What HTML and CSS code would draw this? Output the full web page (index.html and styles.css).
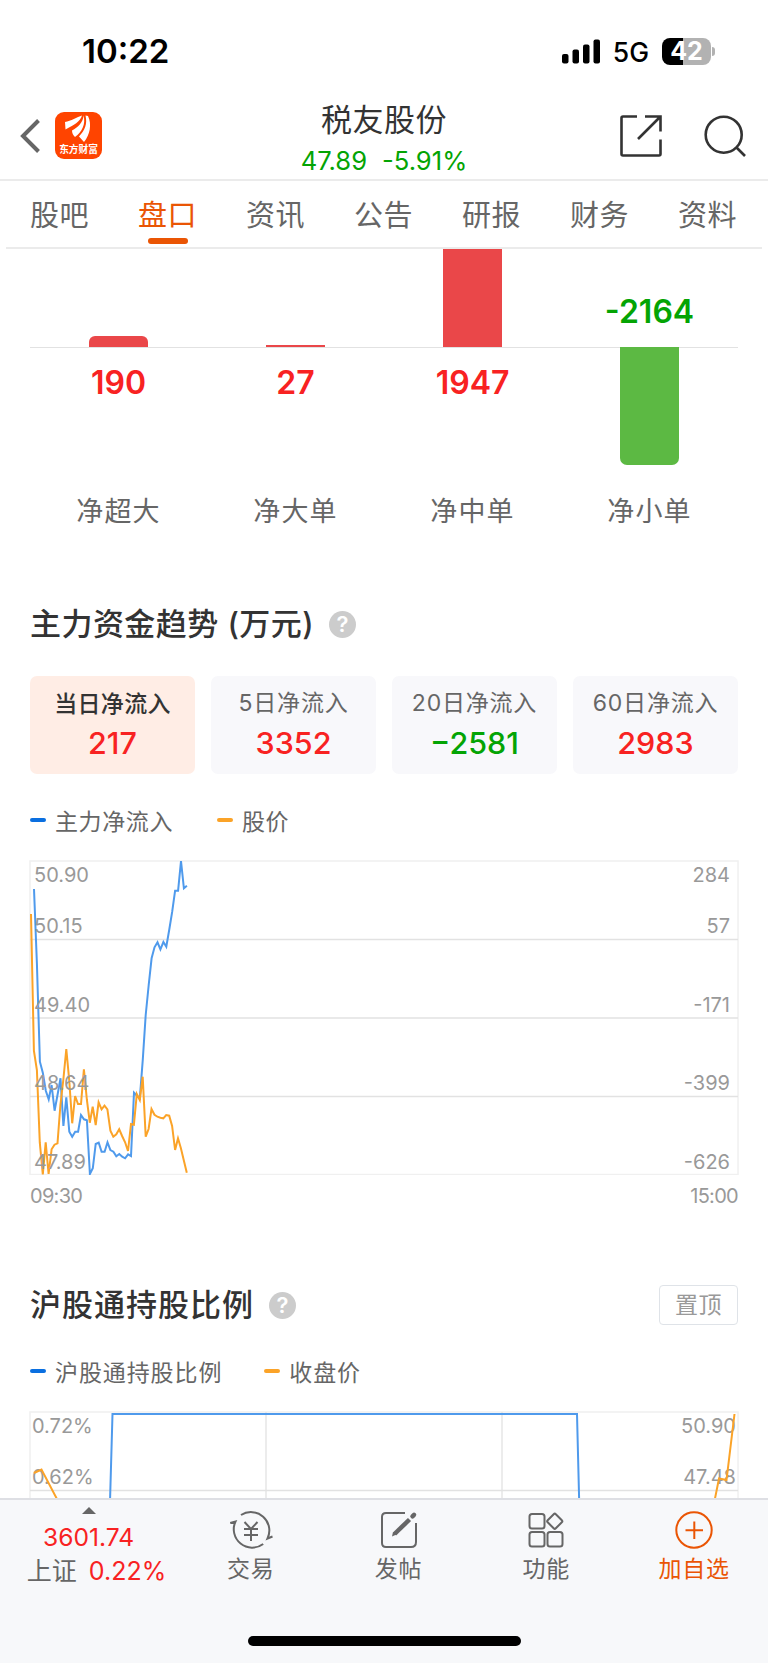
FILE: index.html
```html
<!DOCTYPE html>
<html lang="zh-CN">
<head>
    <meta charset="UTF-8">
    <meta name="viewport" content="width=device-width, initial-scale=1.0">
    <title>税友股份 - 盘口</title>
    <link rel="stylesheet" href="styles.css">
</head>
<body>
    <div class="status-bar">
        <span class="time">10:22</span>
        <div class="status-right">
            <svg class="signal" width="39" height="25" viewBox="0 0 39 25">
                <rect x="0" y="15" width="6.5" height="9.5" rx="2"/>
                <rect x="10.5" y="10.5" width="6.5" height="14" rx="2"/>
                <rect x="21" y="5.5" width="6.5" height="19" rx="2"/>
                <rect x="31.5" y="0.5" width="6.5" height="24" rx="2"/>
            </svg>
            <span class="network">5G</span>
            <div class="battery"><span>42</span></div>
            <i class="battery-tip"></i>
        </div>
    </div>

    <header class="header">
        <div class="header-left">
            <svg width="20" height="36" viewBox="0 0 20 36" fill="none" stroke="#666" stroke-width="4">
                <path d="M18.5 2.5L3 18L18.5 33.5"/>
            </svg>
            <div class="app-logo">
                <svg width="47" height="30" viewBox="0 0 47 30" fill="#fff">
                    <path d="M10 10C16 9 22 5 27 3.500C25 10 19 13 10.500 17.500Z"/>
                    <path d="M28.500 3.500C28 11 23 15 17 18.500C17 21 18 23 20 25C27 20 31 12 28.500 3.500Z"/>
                    <path d="M30.500 3.500C32.500 12 30 18 24 24.500L29 30C35 23 37 12 33 4Z"/>
                </svg>
                <span>东方财富</span>
            </div>
        </div>
        <div class="header-title">
            <h1>税友股份</h1>
            <p><span>47.89</span><span>-5.91%</span></p>
        </div>
        <div class="header-right">
            <svg width="42" height="42" viewBox="0 0 42 42" fill="none" stroke="#333" stroke-width="2.6">
                <path d="M17 1.500H3Q1.500 1.500 1.500 3V39Q1.500 40.500 3 40.500H39Q40.500 40.500 40.500 39V24.500"/>
                <path d="M25 1.500H40.500V16.500M40.500 1.500L18 24"/>
            </svg>
            <svg width="42" height="42" viewBox="0 0 42 42" fill="none" stroke="#333" stroke-width="2.6">
                <circle cx="19.700" cy="19.700" r="18"/>
                <path d="M32 32L41 41"/>
            </svg>
        </div>
    </header>

    <nav class="tabs">
        <a>股吧</a>
        <a class="active">盘口</a>
        <a>资讯</a>
        <a>公告</a>
        <a>研报</a>
        <a>财务</a>
        <a>资料</a>
    </nav>

    <main>
        <section class="net-order">
            <div class="order-col">
                <div class="upper"><div class="bar red" style="height: 11px"></div></div>
                <div class="lower"><b class="up">190</b></div>
                <span class="name">净超大</span>
            </div>
            <div class="order-col">
                <div class="upper"><div class="bar red thin" style="height: 2px"></div></div>
                <div class="lower"><b class="up">27</b></div>
                <span class="name">净大单</span>
            </div>
            <div class="order-col">
                <div class="upper"><div class="bar red" style="height: 130px"></div></div>
                <div class="lower"><b class="up">1947</b></div>
                <span class="name">净中单</span>
            </div>
            <div class="order-col">
                <div class="upper"><b class="down">-2164</b></div>
                <div class="lower"><div class="bar green" style="height: 118px"></div></div>
                <span class="name">净小单</span>
            </div>
        </section>

        <section class="trend">
            <div class="section-title">
                <h2>主力资金趋势 (万元)</h2>
                <span class="help">?</span>
            </div>
            <div class="cards">
                <div class="card selected"><span>当日净流入</span><b class="up">217</b></div>
                <div class="card"><span>5日净流入</span><b class="up">3352</b></div>
                <div class="card"><span>20日净流入</span><b class="down">−2581</b></div>
                <div class="card"><span>60日净流入</span><b class="up">2983</b></div>
            </div>
            <div class="legend">
                <span><i class="blue"></i>主力净流入</span>
                <span><i class="orange"></i>股价</span>
            </div>
            <svg class="chart" width="710" height="315" viewBox="-1 -1 710 315">
                <g class="frame">
                    <rect x="0" y="0" width="708" height="313.500"/>
                </g>
                <g class="grid">
                    <path d="M0 78.500H708M0 157H708M0 235.500H708"/>
                </g>
                <polyline id="flow-line" class="line-blue"/>
                <polyline id="price-line" class="line-orange"/>
                <g class="axis">
                    <text x="4" y="21">50.90</text>
                    <text x="4" y="72">50.15</text>
                    <text x="4" y="150.500">49.40</text>
                    <text x="4" y="229">48.64</text>
                    <text x="4" y="308">47.89</text>
                </g>
                <g class="axis end">
                    <text x="700" y="21">284</text>
                    <text x="700" y="72">57</text>
                    <text x="700" y="150.500">-171</text>
                    <text x="700" y="229">-399</text>
                    <text x="700" y="308">-626</text>
                </g>
            </svg>
            <div class="time-axis"><span>09:30</span><span>15:00</span></div>
        </section>

        <section class="holding">
            <div class="section-title">
                <h2>沪股通持股比例</h2>
                <span class="help">?</span>
                <button class="pin">置顶</button>
            </div>
            <div class="legend">
                <span><i class="blue"></i>沪股通持股比例</span>
                <span><i class="orange"></i>收盘价</span>
            </div>
            <svg class="chart" width="710" height="87" viewBox="-1 -1 710 87">
                <g class="frame">
                    <rect x="0" y="0" width="708" height="314"/>
                </g>
                <g class="grid">
                    <path d="M0 78.500H708M236 0V90M472 0V90"/>
                </g>
                <g class="axis">
                    <text x="2" y="21">0.72%</text>
                    <text x="2" y="72">0.62%</text>
                </g>
                <g class="axis end">
                    <text x="706" y="21">50.90</text>
                    <text x="706" y="72">47.48</text>
                </g>
                <polyline class="line-blue" points="80,90 82.500,2 547,2 549.200,90"/>
                <polyline class="line-orange" points="4,61 11.500,57.500 28,89"/>
                <polyline class="line-orange" points="684.500,89 689,66.500 696.500,68 704.500,2"/>
            </svg>
        </section>
    </main>

    <footer class="bottom-bar">
        <div class="index">
            <i class="arrow"></i>
            <span class="point">3601.74</span>
            <span class="change">上证 <em>0.22%</em></span>
        </div>
        <a>
            <svg width="44" height="39" viewBox="0 0 44 39" fill="none" stroke="#666" stroke-width="2">
                <path d="M12 4A18.400 18.400 0 0 1 38.500 27.500L43.500 25.500"/>
                <path d="M34.200 33A18.400 18.400 0 0 1 6.500 10.500L1.200 12"/>
                <path d="M15.500 11L22 18L28.500 11M15 18H29M15 24H29M22 18V30"/>
            </svg>
            <span>交易</span>
        </a>
        <a>
            <svg width="38" height="39" viewBox="0 0 38 39" fill="none" stroke="#666" stroke-width="2">
                <path d="M25 2H6Q2 2 2 6V32Q2 36 6 36H31Q36 36 36 31V12"/>
                <path d="M14.500 23L29.500 8.500" stroke-width="4.500"/>
                <path d="M12 25.500L13 21L17.500 23Z" fill="#666" stroke="none"/>
                <path d="M32.500 5.300L34 3.900" stroke-width="4.500" stroke-linecap="round"/>
            </svg>
            <span>发帖</span>
        </a>
        <a>
            <svg width="38" height="39" viewBox="0 0 38 39" fill="none" stroke="#666" stroke-width="2">
                <rect x="2.500" y="3" width="15" height="14.500" rx="2.500"/>
                <rect x="2.500" y="21" width="15" height="14.500" rx="2.500"/>
                <rect x="20.500" y="21" width="15" height="14.500" rx="2.500"/>
                <rect x="22" y="4.500" width="11.500" height="11.500" rx="1.500" transform="rotate(45 27.750 10.250)"/>
            </svg>
            <span>功能</span>
        </a>
        <a class="add">
            <svg width="38" height="39" viewBox="0 0 38 39" fill="none" stroke="#ea5504" stroke-width="2">
                <circle cx="19" cy="19" r="17.700"/>
                <path d="M10.500 19.300H28M19.300 10.500V28"/>
            </svg>
            <span>加自选</span>
        </a>
        <div class="home-indicator"></div>
    </footer>

    <script>
        // 每分钟一个点
        const step = 2.94;
        const flow = [28, 102.3, 200.7, 211.7, 229.7, 238.3, 224, 249.7, 234, 217.3, 265, 236.3, 270.7, 275.7,
            270.7, 270.7, 254, 258.3, 259.3, 313, 307.3, 283, 281.7, 290.7, 290.7, 281.3, 289, 290.7, 295.3, 293,
            295.7, 297.3, 293.3, 295, 231.7, 234.7, 237.3, 198.3, 154, 124, 97.3, 86.3, 81.3, 88.3, 81, 85.7,
            69, 50.7, 29.7, 29.7, 0, 27.3, 24.7];
        const price = [53, 189.7, 209, 281.7, 313.3, 281.3, 313, 288.3, 283.7, 282.3, 244, 219, 188, 219, 262.3,
            235, 243, 243, 208.3, 239, 261.7, 245.7, 264, 241.3, 248.3, 244.7, 248.3, 269.7, 275.7, 273.3, 268.3,
            275, 281.3, 290, 263, 263.7, 233, 239, 215.7, 275.7, 268, 248, 253.7, 255.7, 256.7, 257.3, 254, 254.7,
            265, 289, 277.3, 287.3, 299.7, 311.7];

        function drawLine(id, data, start) {
            const points = data.map((y, i) => (start + i * step).toFixed(1) + ',' + y).join(' ');
            document.getElementById(id).setAttribute('points', points);
        }

        drawLine('flow-line', flow, 4);
        drawLine('price-line', price, 1);
    </script>
</body>
</html>
```
FILE: styles.css
```css
* {
    box-sizing: border-box;
}
body {
    margin: 0;
    width: 768px;
    height: 1663px;
    overflow: hidden;
    background-color: #fff;
    color: #333;
    font-family: Inter, "Noto Sans CJK SC", sans-serif;
    display: flex;
    flex-direction: column;
}
h1, h2, p {
    margin: 0;
}
svg {
    display: block;
    flex: none;
}
i, em {
    font-style: normal;
}
.up {
    color: #f82222;
}
.down {
    color: #04a404;
}

/* 状态栏 */
.status-bar {
    height: 102px;
    padding: 0 53px 0 82px;
    display: flex;
    justify-content: space-between;
    align-items: center;
    color: #000;
}
.time {
    font-size: 33px;
    font-weight: 600;
}
.status-right {
    display: flex;
    align-items: center;
}
.network {
    margin: 1px 13px 0 12px;
    font-size: 26.5px;
    font-weight: 500;
}
.battery {
    width: 49px;
    height: 27px;
    border-radius: 8px;
    background: linear-gradient(to right, #000 21px, #b2b2b2 21px);
    color: #fff;
    font-size: 25px;
    font-weight: 700;
    line-height: 27px;
    text-align: center;
}
.battery-tip {
    width: 3px;
    height: 9px;
    margin-left: 1px;
    border-radius: 0 3px 3px 0;
    background-color: #b2b2b2;
}

/* 头部 */
.header {
    height: 79px;
    border-bottom: 2px solid #ebebeb;
    display: flex;
    justify-content: space-between;
}
.header-left, .header-right {
    width: 190px;
    display: flex;
}
.header-left {
    padding: 10px 0 0 20px;
    gap: 15px;
}
.header-left > svg {
    margin-top: 6px;
}
.app-logo {
    width: 47px;
    height: 47px;
    border-radius: 9px;
    background-color: #ff4400;
    color: #fff;
    overflow: hidden;
}
.app-logo span {
    display: block;
    font: 700 9.7px/14px "Noto Sans CJK SC", sans-serif;
    text-align: center;
    white-space: nowrap;
}
.header-title {
    text-align: center;
}
.header-title h1 {
    font-size: 31px;
    font-weight: 400;
    letter-spacing: 0.5px;
    line-height: 36px;
    white-space: nowrap;
}
.header-title p {
    margin-top: 7px;
    display: flex;
    justify-content: center;
    gap: 15px;
    color: #04a404;
    font-size: 25.6px;
    line-height: 32px;
}
.header-right {
    justify-content: flex-end;
    gap: 42px;
    padding: 13px 22px 0 0;
}

/* 标签 */
.tabs {
    height: 68px;
    margin: 0 6px;
    border-bottom: 2px solid #ebebeb;
    display: flex;
}
.tabs a {
    flex: 1;
    display: flex;
    flex-direction: column;
    align-items: center;
    color: #666;
    font-size: 29px;
    letter-spacing: 0.6px;
    line-height: 70px;
}
.tabs a {
    margin-left: -1px;
}
.tabs .active {
    color: #ea5504;
}
.tabs .active::after {
    content: "";
    width: 40px;
    height: 6px;
    margin-top: -13px;
    border-radius: 3px;
    background-color: #ea5504;
}

/* 净单柱状图 */
.net-order {
    padding: 0 30px;
    display: flex;
}
.order-col {
    flex: 1;
    display: flex;
    flex-direction: column;
    align-items: center;
}
.upper, .lower {
    width: 100%;
    display: flex;
    flex-direction: column;
    align-items: center;
}
.upper {
    height: 98px;
    justify-content: flex-end;
    overflow: hidden;
}
.lower {
    height: 140px;
    border-top: 1px solid #e2e2e2;
}
.order-col b {
    font-size: 32px;
    font-weight: 600;
    line-height: 38px;
}
.upper b {
    margin-bottom: 16px;
}
.lower b {
    margin-top: 16px;
}
.bar {
    width: 59px;
    flex: none;
}
.bar.red {
    border-radius: 6px 6px 0 0;
    background-color: #ea4749;
}
.bar.thin {
    border-radius: 0;
}
.bar.green {
    margin-top: -1px;
    border-radius: 0 0 7px 7px;
    background-color: #5cb943;
}
.order-col .name {
    margin-top: 5px;
    color: #666;
    font-size: 27px;
    letter-spacing: 1.2px;
    line-height: 40px;
}

/* 区块 */
.trend, .holding {
    padding: 0 30px;
}
.trend {
    margin-top: 72px;
}
.section-title {
    height: 40px;
    display: flex;
    align-items: center;
}
.section-title h2 {
    font-size: 31px;
    font-weight: 500;
    letter-spacing: 0.45px;
    line-height: 40px;
}
.help {
    width: 27px;
    height: 27px;
    margin-left: 15px;
    border-radius: 50%;
    background-color: #ccc;
    color: #fff;
    font-size: 22px;
    font-weight: 600;
    line-height: 27px;
    text-align: center;
}
.cards {
    margin-top: 32px;
    display: flex;
    gap: 16px;
}
.card {
    flex: 1;
    height: 98px;
    padding-top: 10px;
    border-radius: 7px;
    background-color: #f8f8fb;
    display: flex;
    flex-direction: column;
    align-items: center;
}
.card span {
    color: #666;
    font-size: 23px;
    letter-spacing: 0.8px;
    line-height: 34px;
}
.card b {
    font-size: 30.5px;
    font-weight: 500;
    line-height: 45px;
}
.card.selected {
    background-color: #ffede5;
}
.card.selected span {
    padding-top: 3px;
    line-height: 31px;
    color: #333;
    font-weight: 500;
    letter-spacing: 0.3px;
}
.legend {
    height: 34px;
    margin-top: 29px;
    display: flex;
    gap: 44px;
    color: #666;
    font-size: 23px;
    letter-spacing: 0.6px;
}
.legend span {
    display: flex;
    align-items: center;
}
.legend i {
    width: 16px;
    height: 4px;
    margin-right: 9px;
    border-radius: 2px;
}
.legend .blue {
    background-color: #0a6fe0;
}
.legend .orange {
    background-color: #fba328;
}
.chart {
    margin: 23px 0 0 -1px;
}
.frame {
    fill: none;
    stroke: #f0f0f0;
    stroke-width: 1.5;
}
.grid {
    fill: none;
    stroke: #e2e2e2;
    stroke-width: 1.3;
}
.line-blue, .line-orange {
    fill: none;
    stroke-width: 2;
}
.line-blue {
    stroke: #4f9aec;
}
.line-orange {
    stroke: #fba328;
}
.axis {
    fill: #999;
    font-size: 20px;
}
.axis.end {
    text-anchor: end;
}
.time-axis {
    margin-top: 7px;
    display: flex;
    justify-content: space-between;
    color: #999;
    font-size: 20px;
    letter-spacing: -0.7px;
    line-height: 28px;
}
.holding {
    margin-top: 75px;
}
.holding h2 {
    letter-spacing: 1px;
}
.holding .legend {
    gap: 42px;
    letter-spacing: 0.9px;
}
.pin {
    width: 79px;
    height: 40px;
    margin-left: auto;
    padding: 0;
    border: 1.5px solid #dfe3e8;
    border-radius: 4px;
    background-color: #fff;
    color: #999;
    font-family: inherit;
    font-size: 23px;
    letter-spacing: 0.6px;
    line-height: 36px;
}

/* 底部栏 */
.bottom-bar {
    flex: 1;
    border-top: 2px solid #dedfe4;
    background-color: #f7f8fa;
    display: grid;
    grid-template-columns: 177px repeat(4, 1fr);
    grid-template-rows: 136px 10px;
}
.index, .bottom-bar a {
    display: flex;
    flex-direction: column;
    align-items: center;
}
.bottom-bar a {
    padding-top: 11px;
    color: #666;
    font-size: 23px;
    letter-spacing: 0.8px;
}
.bottom-bar a span {
    margin-top: 2px;
    line-height: 34px;
}
.bottom-bar .add {
    color: #ea5504;
}
.arrow {
    margin-top: 7px;
    border: 7px solid transparent;
    border-top: 0;
    border-bottom-color: #666;
}
.point {
    margin-top: 7px;
    color: #f82222;
    font-size: 24.6px;
    line-height: 32px;
}
.change {
    padding-left: 16px;
    color: #666;
    font-size: 25px;
    line-height: 36px;
    white-space: nowrap;
}
.change em {
    margin-left: 5px;
    color: #f82222;
}
.home-indicator {
    grid-column: 1 / -1;
    justify-self: center;
    width: 273px;
    height: 10px;
    border-radius: 5px;
    background-color: #000;
}
```
